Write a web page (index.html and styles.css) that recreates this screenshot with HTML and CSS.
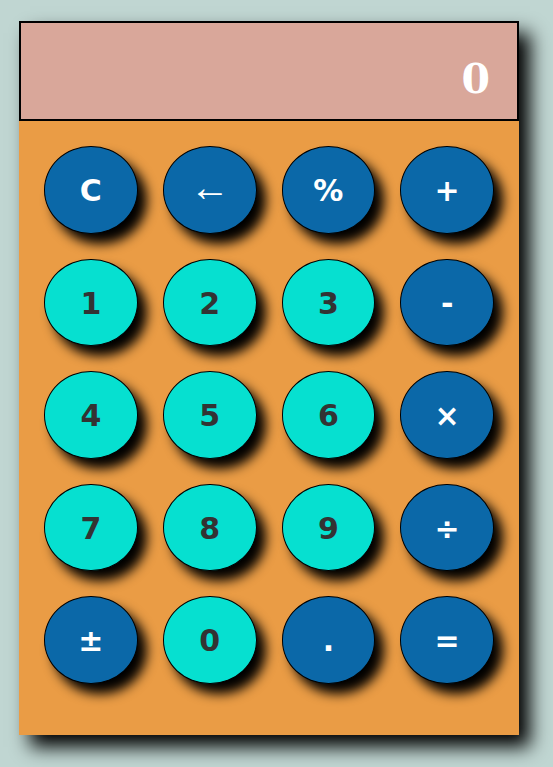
FILE: index.html
```html
<!DOCTYPE html>
<html>
<head>
<meta charset="utf-8">
<link rel="stylesheet" href="styles.css">
</head>
<body>
<div class="calc">
  <div class="display">0</div>
  <div class="keys">
    <button class="key op">C</button>
    <button class="key op arrow">←</button>
    <button class="key op">%</button>
    <button class="key op">+</button>
    <button class="key num">1</button>
    <button class="key num">2</button>
    <button class="key num">3</button>
    <button class="key op">-</button>
    <button class="key num">4</button>
    <button class="key num">5</button>
    <button class="key num">6</button>
    <button class="key op">×</button>
    <button class="key num">7</button>
    <button class="key num">8</button>
    <button class="key num">9</button>
    <button class="key op">÷</button>
    <button class="key op">±</button>
    <button class="key num">0</button>
    <button class="key op">.</button>
    <button class="key op">=</button>
  </div>
</div>
</body>
</html>
```
FILE: styles.css
```css
html, body {
  margin: 0;
  padding: 0;
  background: #c0d6d2;
}
body {
  box-sizing: border-box;
  min-height: 767px;
  padding: 21px 0 0 19px;
}
.calc {
  width: 500px;
  background: #ea9c45;
  box-shadow: 11px 12px 18px #000;
}
.display {
  box-sizing: border-box;
  height: 100px;
  border: 2px solid #000;
  background: #d9a79a;
  color: #fff;
  font-family: "DejaVu Serif", serif;
  font-weight: bold;
  font-size: 41px;
  line-height: 40px;
  text-align: right;
  padding: 36px 27px 0 0;
}
.keys {
  display: grid;
  grid-template-columns: repeat(4, 1fr);
  column-gap: 25px;
  row-gap: 25px;
  padding: 25px 25px 51px 25px;
}
.key {
  box-sizing: border-box;
  height: 87.5px;
  border: 1px solid #000;
  border-radius: 50%;
  font-family: "DejaVu Sans", Verdana, sans-serif;
  font-weight: bold;
  font-size: 30px;
  padding: 2px 0 0 0;
  box-shadow: 9px 10px 12px #000;
  display: flex;
  align-items: center;
  justify-content: center;
}
.op {
  background: #0b68a8;
  color: #fff;
}
.num {
  background: #06e0d0;
  color: #333;
}
.arrow {
  font-family: "Liberation Serif", serif;
  font-weight: normal;
  font-size: 40px;
  padding: 0 0 4px 0;
}
```
